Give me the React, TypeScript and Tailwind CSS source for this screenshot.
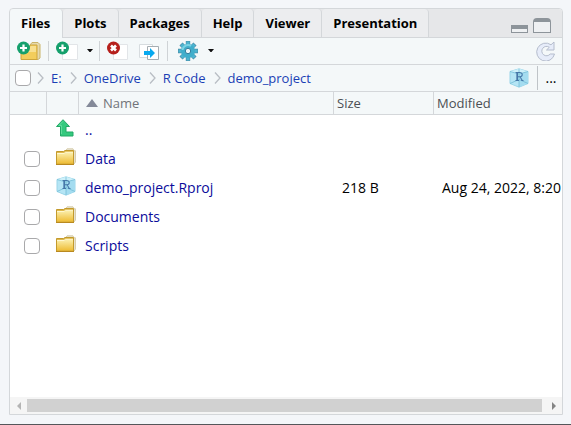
import { useId } from "react";
import type { ReactNode } from "react";

const tabs = ["Files", "Plots", "Packages", "Help", "Viewer", "Presentation"];
const crumbs = ["E:", "OneDrive", "R Code", "demo_project"];

type Entry = { name: string; kind: "folder" | "project"; size?: string; modified?: string };

const entries: Entry[] = [
  { name: "Data", kind: "folder" },
  { name: "demo_project.Rproj", kind: "project", size: "218 B", modified: "Aug 24, 2022, 8:20" },
  { name: "Documents", kind: "folder" },
  { name: "Scripts", kind: "folder" },
];

function FolderIcon() {
  const id = useId();
  return (
    <svg className="block" width="20" height="17" viewBox="0 0 20 17" aria-hidden="true">
      <defs>
        <linearGradient id={id} x1="0" y1="0" x2="0" y2="1">
          <stop offset="0" stopColor="#fbf0b0" />
          <stop offset="1" stopColor="#efbd36" />
        </linearGradient>
      </defs>
      <path d="M9 3.500 11 .8h6l1 2h1.500V14l-1.500 2H16" fill="#e6e1d0" stroke="#d9cfae" />
      <path d="M.5 16V3.500h7l1.500-1h8.500V16z" fill="#dfb94e" stroke="#c39a2c" />
      <path d="M1 15.500v-10h7l1.500-1.200H17v11.200z" fill={`url(#${id})`} />
      <path d="M1 5.500h7l1.500-1.200H17" fill="none" stroke="#fff8cf" />
      <path d="M0 16.500h18" stroke="#b98920" />
    </svg>
  );
}

function ProjectIcon() {
  return (
    <svg className="block" width="20" height="20" viewBox="0 0 20 20" aria-hidden="true">
      <path d="M10 .8 19 3.500v12L10 19.200 1 15.500v-12z" fill="#b5e5f5" stroke="#9ad5e8" />
      <path d="M1 3.500 10 6l9-2.500L10 .8z" fill="#cdf0fa" />
      <path d="M10 6v13l9-3.500v-12z" fill="#a4dcf0" />
      <path d="M1 3.500 10 6l9-2.500M10 1v18M1 15.500l9-4 9 4" fill="none" stroke="#74bcd6" strokeWidth=".8" />
      <path
        d="M6.500 4.500h4.200c3.300 0 3.300 4 .3 4.200H8.300M11 8.700l2.300 3.800M6.500 12.500H10M12.200 12.500h2.300"
        fill="none"
        stroke="#4577a8"
        strokeWidth="1.100"
      />
      <path d="M8.200 4.500v8" stroke="#4577a8" strokeWidth="1.700" />
    </svg>
  );
}

function UpIcon() {
  return (
    <svg className="block" width="18" height="18" viewBox="0 0 18 18" aria-hidden="true">
      <path d="M7 .7 13.500 7.500H10V13h7v4H4.500V7.500H.5z" fill="#34c97e" stroke="#23a866" />
      <path d="M7 2.500 3 6.500h2.500V15" fill="none" stroke="#5fdc9b" />
    </svg>
  );
}

function PlusBadge() {
  return (
    <>
      <circle cx="6.500" cy="7" r="6.500" fill="#15a06c" />
      <path d="M6.500 3.500v7M3 7h7" stroke="#fff" strokeWidth="2.200" />
    </>
  );
}

function NewFolderIcon() {
  return (
    <svg width="24" height="20" viewBox="0 0 24 20" aria-hidden="true">
      <path d="M13 4 15 1.500h6l2 2V17l-2 1.500h-2z" fill="#e6d9ad" stroke="#c9b368" />
      <path d="M4 18.500V6h8l1.500-2H20v14.500z" fill="#f3cd5b" stroke="#cda53c" />
      <path d="M5 7h7l2-2h5v6H5z" fill="#f8e090" />
      <PlusBadge />
    </svg>
  );
}

function NewFileIcon() {
  return (
    <svg width="22" height="20" viewBox="0 0 22 20" aria-hidden="true">
      <path d="M6.500 3.500h15v15h-15z" fill="#fff" stroke="#e2e5e8" />
      <PlusBadge />
    </svg>
  );
}

function DeleteIcon() {
  return (
    <svg width="22" height="20" viewBox="0 0 22 20" aria-hidden="true">
      <path d="M6.500 3.500h14v15h-14z" fill="#fff" stroke="#e2e5e8" />
      <circle cx="6.500" cy="7" r="6.500" fill="#b6201c" />
      <path d="m4 4.500 5 5m0-5-5 5" stroke="#fff" strokeWidth="2.600" />
    </svg>
  );
}

function RenameIcon() {
  return (
    <svg width="22" height="20" viewBox="0 0 22 20" aria-hidden="true">
      <path d="M.5 3.500h13v13H.5z" fill="#fff" stroke="#d7dcdf" />
      <path d="M8.500 5.500h11v13h-11z" fill="#fff" stroke="#a5adb2" />
      <path d="M5 10h6V7l5 5-5 5v-3H5z" fill="#08a9ef" />
    </svg>
  );
}

function GearIcon() {
  return (
    <svg width="20" height="20" viewBox="0 0 20 20" aria-hidden="true">
      <g stroke="#4b8fa9" strokeWidth="4.400">
        <path d="M10 0v20M0 10h20M3 3l14 14M17 3 3 17" />
      </g>
      <g stroke="#4db4d0" strokeWidth="3.200">
        <path d="M10 .5v19M.5 10h19M3.500 3.500l13 13M16.500 3.500l-13 13" />
      </g>
      <circle cx="10" cy="10" r="7" fill="#41aecb" />
      <path d="M4.500 9A5.500 5.500 0 0 1 13 5" fill="none" stroke="#7bd3e4" strokeWidth="2" />
      <circle cx="10" cy="10" r="2.700" fill="#eff7f9" stroke="#347f9f" />
    </svg>
  );
}

function RefreshIcon() {
  return (
    <svg width="20" height="20" viewBox="0 0 20 20" aria-hidden="true">
      <path
        d="M15 3.800 18 1v8h-7.500l2.800-2.700A4.700 4.700 0 1 0 14.200 13h4.300A9 9 0 1 1 15 3.800z"
        fill="#e6ecf9"
        stroke="#b4bccc"
      />
    </svg>
  );
}

function Caret() {
  return (
    <svg width="6" height="4" viewBox="0 0 6 4" aria-hidden="true">
      <path d="M0 0h6L3.500 3h-1z" fill="#111" />
    </svg>
  );
}

function Chevron() {
  return (
    <svg width="8" height="14" viewBox="0 0 8 14" aria-hidden="true">
      <path d="m1 1.500 5 5.500-5 5.500" fill="none" stroke="#b9bec4" strokeWidth="1.300" />
    </svg>
  );
}

function ToolButton({ label, className, children }: { label: string; className: string; children: ReactNode }) {
  return (
    <button type="button" aria-label={label} className={`flex h-6 shrink-0 items-center ${className}`}>
      {children}
    </button>
  );
}

function Separator() {
  return <span className="h-5 w-px shrink-0 bg-[#cfd3d6]" />;
}

function Check({ label }: { label: string }) {
  return (
    <input
      type="checkbox"
      aria-label={label}
      className="block size-4 shrink-0 appearance-none rounded border border-[#a9a9ab] bg-white"
    />
  );
}

export default function App() {
  return (
    <main className="flex h-screen flex-col border-b border-[#55565a] bg-[#f4f6f9] px-2 pt-2 pb-[9px] font-['Open_Sans','Noto_Sans',sans-serif] text-sm">
      <section className="ml-px flex min-h-0 flex-1 flex-col overflow-hidden rounded-t border border-[#d4d7da] bg-white">
        <header className="flex h-[29px] shrink-0 bg-[#e6e7e9]">
          <div role="tablist" className="flex text-[13px] font-bold">
            {tabs.map((tab, index) => (
              <button
                key={tab}
                type="button"
                role="tab"
                aria-selected={index === 0}
                className={
                  index === 0
                    ? "rounded-t-sm border-r border-[#d4d7da] bg-[#f4f8f9] pr-3 pl-[11px]"
                    : "rounded-t-sm border-r border-b border-[#d4d7da] bg-[#ecedef] px-[11px]"
                }
              >
                {tab}
              </button>
            ))}
          </div>
          <div className="flex flex-1 items-end justify-end gap-[5px] border-b border-[#d4d7da] pr-[11px] pb-1">
            <button type="button" aria-label="Minimize" className="h-2 w-[17px] border border-t-4 border-[#8d949a] bg-[#eef0f2]" />
            <button type="button" aria-label="Maximize" className="h-[15px] w-[18px] rounded-t-sm border border-t-4 border-[#8d949a] bg-[#eef0f2]" />
          </div>
        </header>

        <div className="flex h-[27px] shrink-0 items-center border-b border-[#d4d7da] bg-[#f4f8f9] pr-1.5 pl-[7px]">
          <ToolButton label="New Folder" className="mr-[7px]"><NewFolderIcon /></ToolButton>
          <Separator />
          <ToolButton label="New File" className="ml-[7px] gap-[9px]"><NewFileIcon /><Caret /></ToolButton>
          <span className="w-1.5" />
          <Separator />
          <ToolButton label="Delete" className="ml-[7px]"><DeleteIcon /></ToolButton>
          <ToolButton label="Rename" className="ml-2.5"><RenameIcon /></ToolButton>
          <span className="w-1.5" />
          <Separator />
          <ToolButton label="More" className="ml-2.5 gap-2.5"><GearIcon /><Caret /></ToolButton>
          <ToolButton label="Refresh" className="ml-auto"><RefreshIcon /></ToolButton>
        </div>

        <nav aria-label="Path" className="flex h-[27px] shrink-0 items-center border-b border-[#d4d7da] bg-[#f4f8f9] pl-[5px] text-[13px] text-[#1a3fb5]">
          <Check label="Select all" />
          {crumbs.map((crumb) => (
            <span key={crumb} className="flex items-center">
              <span className="mx-1.5"><Chevron /></span>
              <a href="#" className="pr-0.5">{crumb}</a>
            </span>
          ))}
          <a href="#" aria-label="Go to project directory" className="mr-2 ml-auto"><ProjectIcon /></a>
          <button type="button" className="h-6 w-[25px] border-l border-[#bfc4c8] pl-0.5 text-center text-sm text-black">...</button>
        </nav>

        <div className="min-h-0 flex-1 overflow-hidden">
          <table className="w-full table-fixed border-separate border-spacing-0 whitespace-nowrap">
            <colgroup>
              <col className="w-[37px]" />
              <col className="w-8" />
              <col className="w-[255px]" />
              <col className="w-[100px]" />
              <col />
            </colgroup>
            <thead>
              <tr className="h-[23px] bg-[#f4f8f9] text-left text-[13px] text-[#4b4f54]">
                <td className="border-r border-b border-[#d4d7da]" />
                <td className="border-r border-b border-[#d4d7da]" />
                <th className="border-r border-b border-[#d4d7da] p-0 pl-[7px] font-normal">
                  <span className="flex items-center gap-[5px] text-[#717479]">
                    <svg width="12" height="8" viewBox="0 0 12 8" aria-hidden="true">
                      <path d="M6 0 12 8H0z" fill="#848a99" />
                    </svg>
                    Name
                  </span>
                </th>
                <th className="border-r border-b border-[#d4d7da] p-0 pl-[3px] font-normal">Size</th>
                <th className="border-b border-[#d4d7da] p-0 pl-[3px] font-normal">Modified</th>
              </tr>
            </thead>
            <tbody className="text-black">
              <tr className="h-[29px]">
                <td />
                <td className="p-0 pb-1 pl-[9px]"><UpIcon /></td>
                <td className="p-0 pl-1.5"><a href="#" className="text-[#0b0b9b]">..</a></td>
                <td />
                <td />
              </tr>
              {entries.map((entry) => (
                <tr key={entry.name} className="h-[29px]">
                  <td className="p-0 pl-[14px]"><Check label={`Select ${entry.name}`} /></td>
                  <td className="p-0 pb-1 pl-[9px]">{entry.kind === "folder" ? <FolderIcon /> : <ProjectIcon />}</td>
                  <td className="p-0 pl-1.5"><a href="#" className="text-[#0b0b9b]">{entry.name}</a></td>
                  <td className="p-0 pl-2">{entry.size}</td>
                  <td className="p-0 pl-2">{entry.modified}</td>
                </tr>
              ))}
            </tbody>
          </table>
        </div>

        <div className="flex h-[17px] shrink-0 items-center bg-[#f5f5f5]">
          <button type="button" aria-label="Scroll left" className="flex w-[17px] justify-center">
            <svg width="4" height="8" viewBox="0 0 4 8" aria-hidden="true"><path d="M4 0v8L0 4z" fill="#b4b4b4" /></svg>
          </button>
          <div className="mr-1 h-[13px] flex-1 bg-[#d1d1d1]" />
          <button type="button" aria-label="Scroll right" className="flex w-4 justify-center">
            <svg width="4" height="8" viewBox="0 0 4 8" aria-hidden="true"><path d="M0 0v8l4-4z" fill="#858585" /></svg>
          </button>
        </div>
      </section>
    </main>
  );
}
